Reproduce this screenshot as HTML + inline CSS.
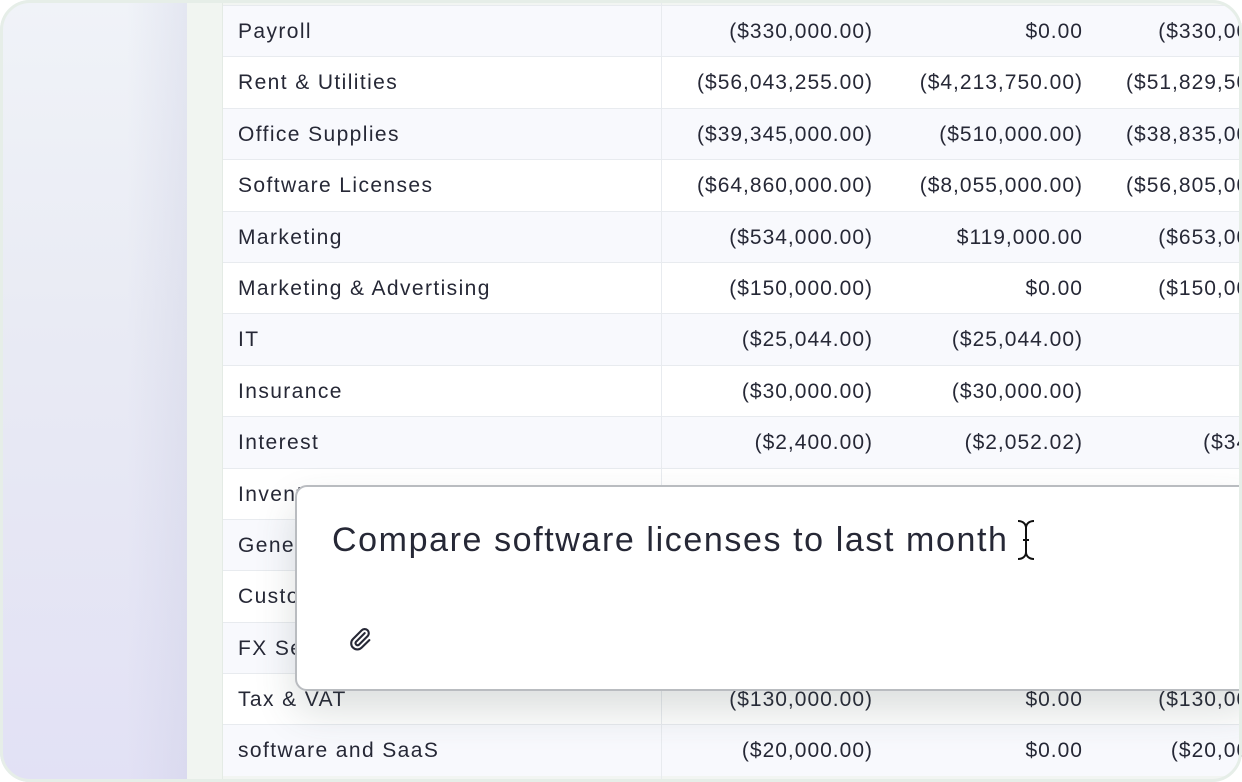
<!DOCTYPE html>
<html><head><meta charset="utf-8"><style>
*{margin:0;padding:0;box-sizing:border-box}
body{width:1242px;height:782px;background:#fff;overflow:hidden;position:relative;font-family:"Liberation Sans",sans-serif}
.card{position:absolute;left:0;top:0;width:1242px;height:782px;border-radius:30px;overflow:hidden;background:#f2f5f2}
.frame{position:absolute;left:0;top:0;width:1242px;height:782px;border:3px solid #e6eee8;border-radius:30px}
.left{position:absolute;left:0;top:0;width:187px;height:782px;background:linear-gradient(180deg,#f0f3f8 0%,#e9ebf4 40%,#e2e1f5 100%)}
.left:after{content:"";position:absolute;right:0;top:0;width:60px;height:100%;background:linear-gradient(90deg,rgba(200,202,225,0),rgba(200,202,225,.3))}
.strip{position:absolute;left:187px;top:0;width:36px;height:782px;background:#f1f5f1;border-right:1px solid #e4ebe5}
.table{position:absolute;left:223px;top:5px;width:1030px}
.row{height:51.4px;position:relative;border-top:1px solid #e8ebef;font-size:21px;color:#262836;letter-spacing:1px}
.row.a{background:#f8f9fd}.row.b{background:#fff}
.row span{position:absolute;top:14px;white-space:nowrap}
.n{left:15px;letter-spacing:1.4px}
.c1{right:380px}
.c2{right:170px}
.c3{right:-49px}
.div{position:absolute;left:661px;top:0;width:1px;height:782px;background:#e8ebef}
.pop{position:absolute;left:295px;top:485px;width:960px;height:206px;background:#fff;border:2px solid #b9bcc0;border-radius:12px;box-shadow:0 20px 40px rgba(60,80,70,.18)}
.pop .t{position:absolute;left:35px;top:34px;font-size:34px;color:#262836;letter-spacing:1.6px;white-space:nowrap}
</style></head><body>
<div class="card">
<div class="left"></div>
<div class="strip"></div>
<div class="table">
<div class="row a"><span class="n">Payroll</span><span class="c1">($330,000.00)</span><span class="c2">$0.00</span><span class="c3">($330,000.00)</span></div>
<div class="row b"><span class="n">Rent &amp; Utilities</span><span class="c1">($56,043,255.00)</span><span class="c2">($4,213,750.00)</span><span class="c3">($51,829,505.00)</span></div>
<div class="row a"><span class="n">Office Supplies</span><span class="c1">($39,345,000.00)</span><span class="c2">($510,000.00)</span><span class="c3">($38,835,000.00)</span></div>
<div class="row b"><span class="n">Software Licenses</span><span class="c1">($64,860,000.00)</span><span class="c2">($8,055,000.00)</span><span class="c3">($56,805,000.00)</span></div>
<div class="row a"><span class="n">Marketing</span><span class="c1">($534,000.00)</span><span class="c2">$119,000.00</span><span class="c3">($653,000.00)</span></div>
<div class="row b"><span class="n">Marketing &amp; Advertising</span><span class="c1">($150,000.00)</span><span class="c2">$0.00</span><span class="c3">($150,000.00)</span></div>
<div class="row a"><span class="n">IT</span><span class="c1">($25,044.00)</span><span class="c2">($25,044.00)</span></div>
<div class="row b"><span class="n">Insurance</span><span class="c1">($30,000.00)</span><span class="c2">($30,000.00)</span></div>
<div class="row a"><span class="n">Interest</span><span class="c1">($2,400.00)</span><span class="c2">($2,052.02)</span><span class="c3">($347.98)</span></div>
<div class="row b"><span class="n">Inventory</span></div>
<div class="row a"><span class="n">General</span></div>
<div class="row b"><span class="n">Customer</span></div>
<div class="row a"><span class="n">FX Services</span></div>
<div class="row b"><span class="n">Tax &amp; VAT</span><span class="c1">($130,000.00)</span><span class="c2">$0.00</span><span class="c3">($130,000.00)</span></div>
<div class="row a"><span class="n">software and SaaS</span><span class="c1">($20,000.00)</span><span class="c2">$0.00</span><span class="c3">($20,000.00)</span></div>
</div>
<div class="div"></div>
<div class="pop">
<div class="t">Compare software licenses to last month</div>
<svg style="position:absolute;left:718px;top:32px" width="22" height="42" viewBox="0 0 22 42" fill="none" stroke="#111" stroke-width="2"><path d="M3 2c5 0 8 3 8 7v24c0 4-3 7-8 7M19 2c-5 0-8 3-8 7v24c0 4 3 7 8 7M8 21h6"/></svg>
<svg style="position:absolute;left:49px;top:138px" width="28" height="28" viewBox="0 0 24 24" fill="none" stroke="#262836" stroke-width="1.8" stroke-linecap="round"><path d="M16 7l-7.5 7.5a1.8 1.8 0 0 0 2.5 2.5L18.5 9.5a3.5 3.5 0 0 0-5-5L6 12a5.2 5.2 0 0 0 7.4 7.4L20 13"/></svg>
</div>
</div>
<div class="frame"></div>
</body></html>
